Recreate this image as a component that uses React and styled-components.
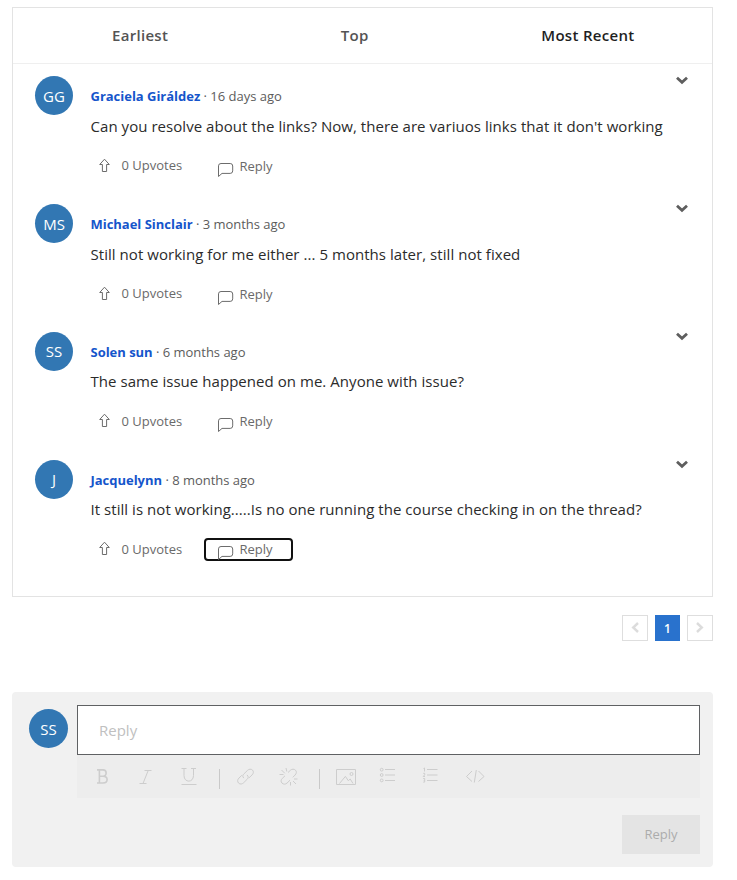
import React from 'react';
import styled, { createGlobalStyle } from 'styled-components';

const GlobalStyle = createGlobalStyle`
  * { box-sizing: border-box; }
  body {
    margin: 0;
    background: #fff;
    font-family: 'Open Sans', sans-serif;
    color: #1f1f1f;
  }
  button { font-family: inherit; padding: 0; border: 0; background: none; }
`;

const Page = styled.main`
  width: 701px;
  margin: 7px 0 0 12px;
  display: flex;
  flex-direction: column;
`;

const Panel = styled.section`
  height: 590px;
  border: 1px solid #e3e3e3;
`;

const Tabs = styled.nav`
  display: flex;
  justify-content: space-between;
  align-items: center;
  height: 56px;
  padding: 0 77.5px 2px 99px;
  border-bottom: 1px solid #efefef;
`;

const Tab = styled.button`
  font-size: 15px;
  line-height: 20px;
  font-weight: 600;
  letter-spacing: 0.3px;
  color: ${(p) => (p.$active ? '#1f1f1f' : '#545454')};
`;

const Comment = styled.article`
  display: grid;
  grid-template-columns: 38px 1fr 14px;
  column-gap: 17.5px;
  height: 127.8px;
  padding: 12.4px 23px 0 22px;
`;

const Avatar = styled.div`
  flex: none;
  display: flex;
  align-items: center;
  justify-content: center;
  width: ${(p) => p.$width || 38}px;
  height: 39px;
  border-radius: 50%;
  background: #3277b3;
  color: #fff;
  font-size: 15px;
  line-height: 20px;
`;

const Body = styled.div`
  min-width: 0;
  padding-top: 10.8px;
  white-space: nowrap;
`;

const Meta = styled.div`
  height: 18px;
  font-size: 13px;
  line-height: 18px;
  letter-spacing: -0.02px;
  color: #5c5c5c;
`;

const Author = styled.a`
  font-weight: 700;
  color: #1555cb;
`;

const Message = styled.p`
  margin: 9.6px 0 0;
  font-size: 15px;
  line-height: 22px;
  letter-spacing: 0.047px;
  color: #2b2b2b;
`;

const Actions = styled.div`
  display: flex;
  align-items: flex-start;
  margin-top: 17.6px;
`;

const Upvote = styled.button`
  display: flex;
  align-items: center;
  gap: 11px;
  height: 22px;
  width: 113.5px;
  padding-left: 7px;
  font-size: 13px;
  line-height: 18px;
  color: #6a6a6a;
`;

const ReplyLink = styled.button`
  display: flex;
  align-items: flex-start;
  gap: 6px;
  width: 89px;
  height: 23px;
  margin-top: 0.5px;
  padding: 0 0 0 11.5px;
  border: 2px solid ${(p) => (p.$focused ? '#111' : 'transparent')};
  border-radius: 4px;
  font-size: 13px;
  line-height: 18px;
  color: #6a6a6a;
  svg { flex: none; margin-top: 5px; }
`;

const Menu = styled.button`
  height: 10px;
  margin-top: -0.5px;
  line-height: 0;
`;

const Pager = styled.nav`
  display: flex;
  justify-content: flex-end;
  gap: 7px;
  margin-top: 18px;
`;

const PageButton = styled.button`
  display: flex;
  align-items: center;
  justify-content: center;
  width: ${(p) => (p.$current ? 25 : 26)}px;
  height: 26px;
  border: ${(p) => (p.$current ? '0' : '1px solid #dedede')};
  background: ${(p) => (p.$current ? '#2972cd' : '#fff')};
  color: #fff;
  font-size: 12px;
  font-weight: 600;
  padding-top: ${(p) => (p.$current ? 1 : 0)}px;
`;

const Composer = styled.section`
  display: flex;
  align-items: flex-start;
  gap: 9px;
  height: 175px;
  margin-top: 51px;
  padding: 13px 13px 0 17px;
  border-radius: 4px;
  background: #f1f1f1;
  & > ${Avatar} { margin-top: 4px; }
`;

const Editor = styled.div`
  flex: 1;
  display: flex;
  flex-direction: column;
`;

const Input = styled.div`
  height: 50px;
  padding: 13px 21px;
  border: 1px solid #5f6163;
  background: #fff;
  color: #c0c0c0;
  font-size: 15px;
  line-height: 22px;
`;

const Toolbar = styled.div`
  display: flex;
  align-items: flex-start;
  height: 43px;
  padding: 11px 0 0 14px;
  background: #ededed;
  color: #cdcdcd;
`;

const Tool = styled.button`
  width: ${(p) => p.$width}px;
  height: 22px;
  color: inherit;
  line-height: 0;
  text-align: left;
`;

const Divider = styled.span`
  width: 1px;
  height: 20px;
  margin: 3px ${(p) => p.$after}px 0 ${(p) => p.$before}px;
  background: #c9c9c9;
`;

const Submit = styled.button`
  align-self: flex-end;
  width: 78px;
  height: 39px;
  margin-top: 17px;
  padding-bottom: 1px;
  background: #e4e4e4;
  color: #acacac;
  font-size: 13px;
`;

const ArrowUp = () => (
  <svg width="13" height="15" viewBox="0 0 13 15" fill="none" stroke="#6c6c6c" strokeLinejoin="round">
    <path d="M6.5 1.2 11.3 6.5H8.6V13.5H4.4V6.5H1.7Z" />
  </svg>
);

const Bubble = () => (
  <svg width="16" height="16" viewBox="0 0 16 16" fill="none" stroke="#6c6c6c" strokeLinejoin="round">
    <path d="M.5 14.5V3.9Q.5 1.5 3 1.5H12.2Q14.7 1.5 14.7 4V8.9Q14.7 11.4 12.2 11.4H4Z" />
  </svg>
);

const Chevron = () => (
  <svg width="14" height="9" viewBox="0 0 14 9" fill="none" stroke="#5e5e5e" strokeWidth="2.8">
    <path d="M2 1.8 7 6.4 12 1.8" />
  </svg>
);

const PageArrow = ({ d }) => (
  <svg width="10" height="14" viewBox="0 0 10 14" fill="none" stroke="#dcdcdc" strokeWidth="2.4">
    <path d={d} />
  </svg>
);

const Glyph = ({ width = 22, children }) => (
  <svg width={width} height="22" viewBox={`0 0 ${width} 22`} fill="none" stroke="currentColor" strokeWidth="1">
    {children}
  </svg>
);

const BoldIcon = () => (
  <Glyph>
    <path strokeWidth="1.6" d="M6 3.9H12C16.2 3.9 16.2 10.2 12 10.2H8.5M12 10.2C17.5 10.2 17.5 17 12 17H6M8.4 3.9V17" />
  </Glyph>
);
const ItalicIcon = () => (
  <Glyph><path d="M10.5 4.5H17.5M5.5 17.5H12.5M14.2 4.5 9 17.5" /></Glyph>
);
const UnderlineIcon = () => (
  <Glyph>
    <path d="M4.5 2.5H9.5M14 2.5H19M7 2.5V9.5C7 17 16.5 17 16.5 9.5V2.5M4.5 18.5H19.5" />
  </Glyph>
);
const LinkIcon = () => (
  <Glyph>
    <path d="M9.3 12.6C7.5 10.8 8.5 9.3 9.3 8.5L13 4.9C14.4 3.5 16.6 3.2 18 4.6 19.4 6 19 8 17.6 9.4L14.6 12.3M12.5 9.4C14.5 11.2 13.6 12.8 12.8 13.6L9.2 17.2C7.8 18.6 5.6 19.1 4.1 17.6 2.6 16.1 3 14 4.4 12.6L7.3 9.8" transform="translate(-.5 -.5)" />
  </Glyph>
);
const UnlinkIcon = () => (
  <Glyph>
    <path d="M10.5 7 13 4.7C14.4 3.4 16.6 3.3 18 4.7 19.4 6.1 19 8.1 17.6 9.5L15.3 11.8M12.5 14.7 9.5 17.6C8.1 19 5.9 19 4.5 17.6 3.1 16.2 3.4 14.3 4.8 12.9L7.5 10.3M8.5 2.5 9.3 6M4 4.5 7.3 7.8M2 9H6M13 16.5V20M15.5 15.5 18.5 18.5M16.5 13.5H20" transform="translate(-.5 -.5)" />
  </Glyph>
);
const ImageIcon = () => (
  <Glyph>
    <path d="M1.5 3.5H20.5V18.5H1.5ZM4.5 17.5 10.4 10.4 13.3 14.7 15.2 13 18 17.5" />
    <circle cx="16.5" cy="8" r="1.5" />
  </Glyph>
);
const BulletListIcon = () => (
  <Glyph>
    <path d="M8 3.5H18M8 9H18M8 14.5H18" />
    <circle cx="4.7" cy="3.7" r="1.4" />
    <circle cx="4.7" cy="9" r="1.4" />
    <circle cx="4.7" cy="14.4" r="1.4" />
  </Glyph>
);
const NumberListIcon = () => (
  <Glyph>
    <path d="M7 3.5H17.5M7 9H17.5M7 14.5H17.5M4.5 1.7V5.5M3.5 2.5H4.5M3.2 7.3H4.7V8.8L3.2 10.5H5M3.2 12.5H4.7V16.1H3.2M3.7 14.4H4.7" />
  </Glyph>
);
const CodeIcon = () => (
  <Glyph><path d="M8 5 2.5 10.5 8 15.5M14.5 5 20 10.5 14.5 15.5M12.3 4 10.3 16.5" /></Glyph>
);

const comments = [
  { initials: 'GG', author: 'Graciela Giráldez', age: '16 days ago', text: "Can you resolve about the links? Now, there are variuos links that it don't working" },
  { initials: 'MS', author: 'Michael Sinclair', age: '3 months ago', text: 'Still not working for me either ... 5 months later, still not fixed' },
  { initials: 'SS', author: 'Solen sun', age: '6 months ago', text: 'The same issue happened on me. Anyone with issue?' },
  { initials: 'J', author: 'Jacquelynn', age: '8 months ago', text: 'It still is not working.....Is no one running the course checking in on the thread?', focused: true },
];

export default function App() {
  return (
    <>
      <GlobalStyle />
      <Page>
        <Panel>
          <Tabs>
            <Tab>Earliest</Tab>
            <Tab>Top</Tab>
            <Tab $active>Most Recent</Tab>
          </Tabs>
          {comments.map((c) => (
            <Comment key={c.author}>
              <Avatar>{c.initials}</Avatar>
              <Body>
                <Meta><Author>{c.author}</Author> · {c.age}</Meta>
                <Message>{c.text}</Message>
                <Actions>
                  <Upvote><ArrowUp />0 Upvotes</Upvote>
                  <ReplyLink $focused={c.focused}><Bubble />Reply</ReplyLink>
                </Actions>
              </Body>
              <Menu aria-label="Comment options"><Chevron /></Menu>
            </Comment>
          ))}
        </Panel>
        <Pager>
          <PageButton aria-label="Previous page"><PageArrow d="M8 2 3.2 6.5 8 11" /></PageButton>
          <PageButton $current>1</PageButton>
          <PageButton aria-label="Next page"><PageArrow d="M2 2 6.8 6.5 2 11" /></PageButton>
        </Pager>
        <Composer>
          <Avatar $width={39}>SS</Avatar>
          <Editor>
            <Input>Reply</Input>
            <Toolbar>
              <Tool $width={43} aria-label="Bold"><BoldIcon /></Tool>
              <Tool $width={43} aria-label="Italic"><ItalicIcon /></Tool>
              <Tool $width={22} aria-label="Underline"><UnderlineIcon /></Tool>
              <Divider $before={20} $after={15} />
              <Tool $width={43} aria-label="Link"><LinkIcon /></Tool>
              <Tool $width={22} aria-label="Remove link"><UnlinkIcon /></Tool>
              <Divider $before={19} $after={15} />
              <Tool $width={42} aria-label="Image"><ImageIcon /></Tool>
              <Tool $width={43} aria-label="Bulleted list"><BulletListIcon /></Tool>
              <Tool $width={44} aria-label="Numbered list"><NumberListIcon /></Tool>
              <Tool $width={22} aria-label="Code"><CodeIcon /></Tool>
            </Toolbar>
            <Submit>Reply</Submit>
          </Editor>
        </Composer>
      </Page>
    </>
  );
}
